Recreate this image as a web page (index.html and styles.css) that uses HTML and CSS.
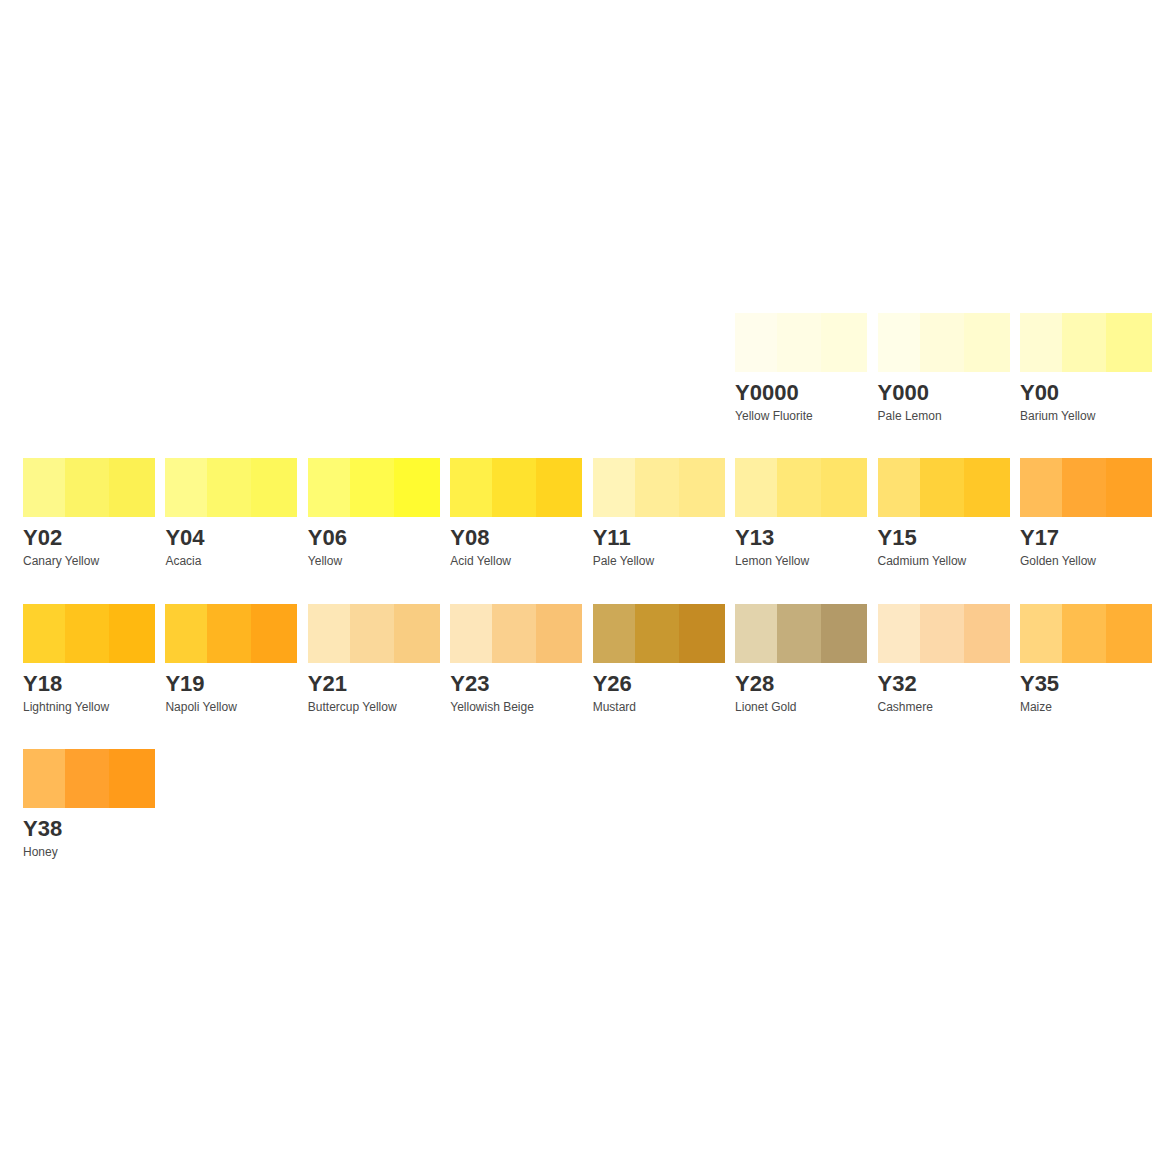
FILE: index.html
```html
<!DOCTYPE html>
<html lang="en">
<head>
<meta charset="utf-8">
<title>Yellow colours</title>
<link rel="stylesheet" href="styles.css">
</head>
<body>
<div class="chart">
  <div class="item start"><div class="swatch y0000"></div><div class="code">Y0000</div><div class="name">Yellow Fluorite</div></div>
  <div class="item"><div class="swatch y000"></div><div class="code">Y000</div><div class="name">Pale Lemon</div></div>
  <div class="item"><div class="swatch y00"></div><div class="code">Y00</div><div class="name">Barium Yellow</div></div>

  <div class="item"><div class="swatch y02"></div><div class="code">Y02</div><div class="name">Canary Yellow</div></div>
  <div class="item"><div class="swatch y04"></div><div class="code">Y04</div><div class="name">Acacia</div></div>
  <div class="item"><div class="swatch y06"></div><div class="code">Y06</div><div class="name">Yellow</div></div>
  <div class="item"><div class="swatch y08"></div><div class="code">Y08</div><div class="name">Acid Yellow</div></div>
  <div class="item"><div class="swatch y11"></div><div class="code">Y11</div><div class="name">Pale Yellow</div></div>
  <div class="item"><div class="swatch y13"></div><div class="code">Y13</div><div class="name">Lemon Yellow</div></div>
  <div class="item"><div class="swatch y15"></div><div class="code">Y15</div><div class="name">Cadmium Yellow</div></div>
  <div class="item"><div class="swatch y17"></div><div class="code">Y17</div><div class="name">Golden Yellow</div></div>

  <div class="item"><div class="swatch y18"></div><div class="code">Y18</div><div class="name">Lightning Yellow</div></div>
  <div class="item"><div class="swatch y19"></div><div class="code">Y19</div><div class="name">Napoli Yellow</div></div>
  <div class="item"><div class="swatch y21"></div><div class="code">Y21</div><div class="name">Buttercup Yellow</div></div>
  <div class="item"><div class="swatch y23"></div><div class="code">Y23</div><div class="name">Yellowish Beige</div></div>
  <div class="item"><div class="swatch y26"></div><div class="code">Y26</div><div class="name">Mustard</div></div>
  <div class="item"><div class="swatch y28"></div><div class="code">Y28</div><div class="name">Lionet Gold</div></div>
  <div class="item"><div class="swatch y32"></div><div class="code">Y32</div><div class="name">Cashmere</div></div>
  <div class="item"><div class="swatch y35"></div><div class="code">Y35</div><div class="name">Maize</div></div>

  <div class="item"><div class="swatch y38"></div><div class="code">Y38</div><div class="name">Honey</div></div>
</div>
</body>
</html>
```

FILE: styles.css
```css
html, body {
  margin: 0;
  padding: 0;
  background: #ffffff;
}

body {
  font-family: "Liberation Sans", Arial, sans-serif;
  color: #333333;
}

.chart {
  display: grid;
  grid-template-columns: repeat(8, 132px);
  column-gap: 10.43px;
  row-gap: 35.3px;
  padding: 313px 0 0 23px;
}

.item.start {
  grid-column-start: 6;
}

.swatch {
  height: 59px;
  --a: #fff;
  --b: #fff;
  --c: #fff;
  background: linear-gradient(to right,
    var(--a) 0, var(--a) 32%,
    var(--b) 32%, var(--b) 65%,
    var(--c) 65%, var(--c) 100%);
}

.code {
  margin-top: 8px;
  font-size: 22px;
  line-height: 25px;
  font-weight: bold;
  color: #333333;
}

.name {
  margin-top: 4px;
  font-size: 12px;
  line-height: 14px;
  color: #4a4a4a;
}

.y0000 { --a: #fffdec; --b: #fffde4; --c: #fffddc; }
.y000  { --a: #fffee8; --b: #fffcda; --c: #fffcce; }
.y00   { --a: #fffcd2; --b: #fffbb2; --c: #fffa94; }
.y02   { --a: #fdf98a; --b: #fcf466; --c: #fcf153; }
.y04   { --a: #fefb8c; --b: #fdf96a; --c: #fdf85a; }
.y06   { --a: #fefc72; --b: #fffb4c; --c: #fffb30; }
.y08   { --a: #fff048; --b: #ffe22e; --c: #ffd520; }
.y11   { --a: #fff4b8; --b: #ffed98; --c: #ffe98a; }
.y13   { --a: #fff0a0; --b: #ffe877; --c: #ffe468; }
.y15   { --a: #ffe170; --b: #ffd23a; --c: #ffc828; }
.y17   { --a: #ffbd58; --b: #ffa834; --c: #ffa225; }
.y18   { --a: #ffd22c; --b: #ffc41c; --c: #ffb910; }
.y19   { --a: #ffcf32; --b: #ffb520; --c: #ffa618; }
.y21   { --a: #fde7b6; --b: #fad89a; --c: #f9cd82; }
.y23   { --a: #fde6ba; --b: #fad08e; --c: #f9c274; }
.y26   { --a: #cda957; --b: #c89830; --c: #c48b24; }
.y28   { --a: #e2d3ac; --b: #c4ae7c; --c: #b39a68; }
.y32   { --a: #fde8c4; --b: #fcd9aa; --c: #fbcb8e; }
.y35   { --a: #ffd67e; --b: #ffbe4d; --c: #ffb035; }
.y38   { --a: #ffba57; --b: #ffa12e; --c: #ff9b1a; }
```
